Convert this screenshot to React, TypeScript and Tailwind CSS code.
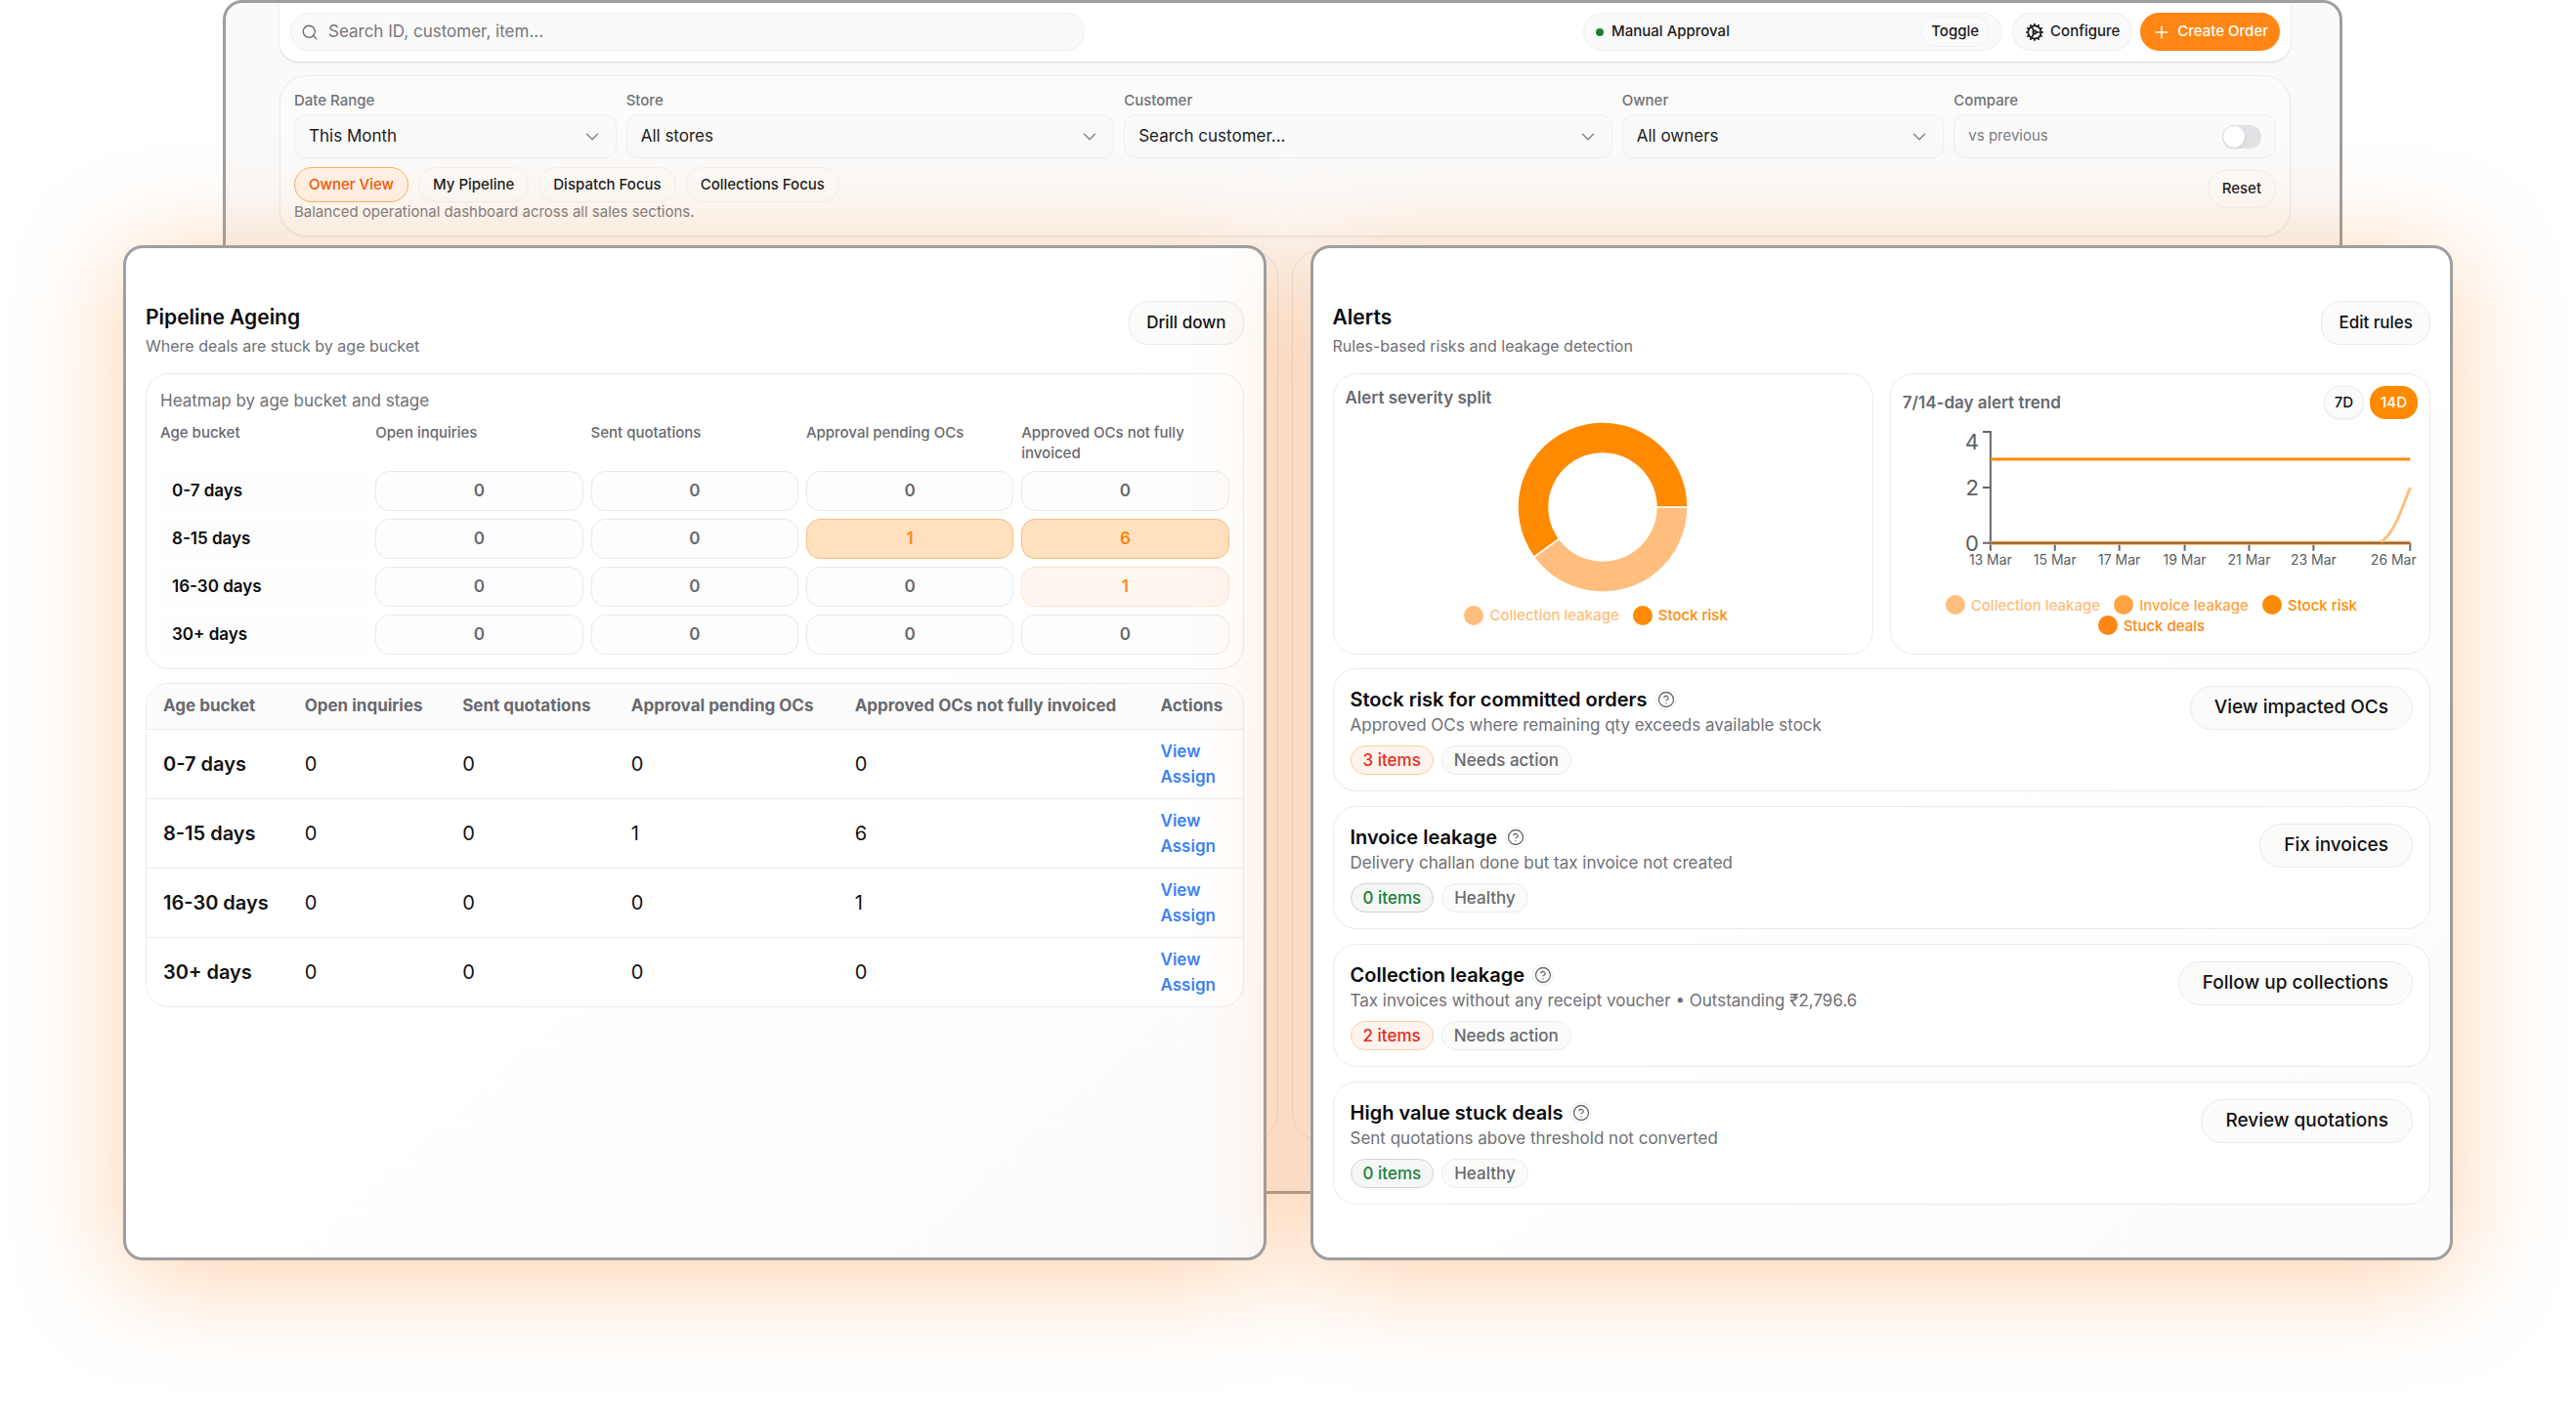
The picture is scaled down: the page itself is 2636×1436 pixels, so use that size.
import type { ReactNode } from "react";
import { ChevronDown, CircleHelp, Cog, Plus, Search } from "lucide-react";

const PRESETS = ["Owner View", "My Pipeline", "Dispatch Focus", "Collections Focus"];
const STAGES = ["Open inquiries", "Sent quotations", "Approval pending OCs", "Approved OCs not fully invoiced"];
const BUCKETS = [
  { label: "0-7 days", counts: [0, 0, 0, 0], heat: [0, 0, 0, 0] },
  { label: "8-15 days", counts: [0, 0, 1, 6], heat: [0, 0, 2, 2] },
  { label: "16-30 days", counts: [0, 0, 0, 1], heat: [0, 0, 0, 1] },
  { label: "30+ days", counts: [0, 0, 0, 0], heat: [0, 0, 0, 0] },
];
const HEAT = [
  "border-[#e9e9eb] bg-[#fdfdfd] text-[#68696e]",
  "border-[#fde3cd] bg-[#fff6f0] text-[#ff8a14]",
  "border-[#fbbd7d] bg-[#ffe1c0] text-[#ff8614]",
];
const ALERTS = [
  { title: "Stock risk for committed orders", text: "Approved OCs where remaining qty exceeds available stock", count: 3, action: "View impacted OCs" },
  { title: "Invoice leakage", text: "Delivery challan done but tax invoice not created", count: 0, action: "Fix invoices" },
  { title: "Collection leakage", text: "Tax invoices without any receipt voucher • Outstanding ₹2,796.6", count: 2, action: "Follow up collections" },
  { title: "High value stuck deals", text: "Sent quotations above threshold not converted", count: 0, action: "Review quotations" },
];
const TICKS = [
  { x: 90, label: "13 Mar" },
  { x: 156, label: "15 Mar" },
  { x: 222, label: "17 Mar" },
  { x: 289, label: "19 Mar" },
  { x: 355, label: "21 Mar" },
  { x: 421, label: "23 Mar" },
  { x: 520, label: "26 Mar" },
];

function SelectField({ id, label, value, span }: { id: string; label: string; value: string; span: string }) {
  return (
    <div className={span}>
      <label htmlFor={id} className="block text-[15px] leading-5 font-medium text-[#707176]">{label}</label>
      <div className="relative mt-1">
        <select id={id} className="h-[45px] w-full appearance-none rounded-xl border border-[#efefef] bg-[#fafafa] px-3.5 text-[17px] text-[#1b1b1d]">
          <option>{value}</option>
        </select>
        <ChevronDown className="pointer-events-none absolute top-3 right-3.5 size-[22px] text-[#8a8a8e]" strokeWidth={1.75} />
      </div>
    </div>
  );
}

function Workspace() {
  return (
    <div className="col-start-1 row-start-1 mr-[113px] mb-[68px] ml-[102px] flex flex-col rounded-[20px] border-[3px] border-[#a19e9d] bg-[#fafafa] pr-[50px] pb-[52px] pl-[55px]">
      <header className="flex items-center gap-2 rounded-b-[20px] bg-white px-[11px] pt-2.5 pb-[11px] shadow-[0_1px_2px_rgba(0,0,0,0.16)]">
        <label className="flex h-[39px] w-[813px] items-center gap-2.5 rounded-[20px] border border-[#eeeeee] bg-[#fafafa] px-2.5">
          <Search className="size-[18px] shrink-0 text-[#6c6c70]" strokeWidth={1.75} />
          <input aria-label="Search" placeholder="Search ID, customer, item..." className="w-full bg-transparent text-[17px] outline-none placeholder:text-[#77777a]" />
        </label>
        <div className="ml-auto flex h-[39px] w-[429px] items-center gap-2 rounded-[20px] border border-[#efefef] bg-[#fafafa] pr-3 pl-3">
          <span className="size-2 rounded-full bg-[#188038]" />
          <span className="text-[15px] font-medium text-[#1b1b1d]">Manual Approval</span>
          <button className="ml-auto h-[31px] rounded-2xl border border-[#eeeeee] px-2.5 text-[15px] font-medium text-[#1b1b1d]">Toggle</button>
        </div>
        <button className="ml-0.5 flex h-[39px] items-center gap-1.5 rounded-[20px] border border-[#eeeeee] bg-[#fafafa] pr-3 pl-3 text-[15px] font-medium text-[#1b1b1d]">
          <Cog className="size-5" strokeWidth={2} />
          Configure
        </button>
        <button className="flex h-[39px] items-center gap-1.5 rounded-[20px] bg-[#ff8614] pr-3 pl-3 text-[15px] font-medium text-white">
          <Plus className="size-5" strokeWidth={1.75} />
          Create Order
        </button>
      </header>

      <section className="mt-3.5 rounded-[28px] border border-[#ececec] bg-[#fbfbfa] px-3.5 pt-[15px] pb-3.5 shadow-[0_1px_2px_rgba(0,0,0,0.08)]">
        <div className="grid grid-cols-12 gap-2.5">
          <SelectField id="range" label="Date Range" value="This Month" span="col-span-2" />
          <SelectField id="store" label="Store" value="All stores" span="col-span-3" />
          <SelectField id="customer" label="Customer" value="Search customer..." span="col-span-3" />
          <SelectField id="owner" label="Owner" value="All owners" span="col-span-2" />
          <div className="col-span-2">
            <span className="block text-[15px] leading-5 font-medium text-[#707176]">Compare</span>
            <label className="mt-1 flex h-[45px] items-center justify-between rounded-xl border border-[#efefef] bg-[#fafafa] px-3.5 text-[15px] text-[#7b7b80]">
              vs previous
              <input type="checkbox" className="peer sr-only" />
              <span className="flex h-6 w-10 rounded-full bg-[#e1e2e5] p-px peer-checked:justify-end">
                <span className="size-[22px] rounded-full bg-white shadow" />
              </span>
            </label>
          </div>
        </div>
        <div className="mt-[9px] flex items-start justify-between">
          <div>
            <div className="flex gap-2.5">
              {PRESETS.map((name, i) => (
                <button
                  key={name}
                  className={
                    i === 0
                      ? "h-9 rounded-full border border-[#fbb061] bg-[#fff2e8] px-3.5 text-[15px] font-medium text-[#f0560a]"
                      : "h-9 rounded-full border border-[#f1f0ef] px-3.5 text-[15px] font-medium text-[#1b1b1d]"
                  }
                >
                  {name}
                </button>
              ))}
            </div>
            <p className="text-[15px] leading-5 text-[#7b7b80]">Balanced operational dashboard across all sales sections.</p>
          </div>
          <button className="mt-[3px] h-[39px] rounded-full border border-[#f1efee] px-3.5 text-[15px] font-medium text-[#1b1b1d]">Reset</button>
        </div>
      </section>

      <div className="mt-3.5 grid flex-1 grid-cols-2 gap-3.5">
        <div className="rounded-[28px] border border-[#e6e6e6]" />
        <div className="rounded-[28px] border border-[#e6e6e6]" />
      </div>
    </div>
  );
}

function Panel({ title, subtitle, action, children }: { title: string; subtitle: string; action: string; children: ReactNode }) {
  return (
    <section className="rounded-[20px] border-[3px] border-[#9d9fa1] bg-linear-to-br from-white from-50% to-[#fbfbfb] px-5 py-[54px] shadow-[0_14px_110px_rgba(255,130,25,0.38)]">
      <div className="mb-4 flex items-start justify-between">
        <div className="pt-[3px]">
          <h2 className="text-[21px] leading-7 font-semibold text-[#0c0c0e]">{title}</h2>
          <p className="mt-[3px] text-[16px] leading-6 text-[#6f7075]">{subtitle}</p>
        </div>
        <button className="h-[45px] rounded-[20px] border border-[#ebebeb] bg-[#fbfbfa] px-[17px] text-[17px] font-medium text-[#121214]">{action}</button>
      </div>
      {children}
    </section>
  );
}

function Heatmap() {
  return (
    <div className="rounded-3xl border border-[#ebebeb] bg-white px-3.5 pt-[15px] pb-3.5">
      <h3 className="text-[17px] leading-6 text-[#6f7075]">Heatmap by age bucket and stage</h3>
      <div className="mt-2.5 grid grid-cols-5 gap-2">
        {["Age bucket", ...STAGES].map((name) => (
          <div key={name} className="text-[15px] leading-[21px] font-medium text-[#68696e]">{name}</div>
        ))}
        {BUCKETS.flatMap((row) => [
          <div key={row.label} className="flex h-[41px] items-center rounded-xl bg-[#fdfdfd] px-3 text-[17px] font-semibold text-[#0c0c0e]">{row.label}</div>,
          ...row.counts.map((n, i) => (
            <div key={row.label + i} className={`flex h-[41px] items-center justify-center rounded-[14px] border text-[17px] font-semibold ${HEAT[row.heat[i]]}`}>{n}</div>
          )),
        ])}
      </div>
    </div>
  );
}

function AgeingTable() {
  return (
    <div className="mt-3.5 overflow-hidden rounded-3xl border border-[#ebebeb] bg-white">
      <table className="w-full table-fixed text-left">
        <colgroup>
          <col className="w-[12.9%]" />
          <col className="w-[14.4%]" />
          <col className="w-[15.4%]" />
          <col className="w-[20.4%]" />
          <col className="w-[27.9%]" />
          <col className="w-[9%]" />
        </colgroup>
        <thead className="bg-[#fcfcfc] text-[17px] text-[#68696e]">
          <tr className="h-[46px] whitespace-nowrap">
            {["Age bucket", ...STAGES, "Actions"].map((name) => (
              <th key={name} className="pl-[17px] font-bold">{name}</th>
            ))}
          </tr>
        </thead>
        <tbody className="text-[20px] text-[#121214]">
          {BUCKETS.map((row) => (
            <tr key={row.label} className="h-[71px] border-t border-[#ebebeb]">
              <th className="pl-[17px] font-semibold">{row.label}</th>
              {row.counts.map((n, i) => (
                <td key={i} className="pl-[17px]">{n}</td>
              ))}
              <td className="pl-[17px] text-[17px] leading-[26px] font-semibold text-[#3b82f6]">
                <a href="#view" className="block">View</a>
                <a href="#assign" className="block">Assign</a>
              </td>
            </tr>
          ))}
        </tbody>
      </table>
    </div>
  );
}

function LegendItem({ dot, text, label }: { dot: string; text: string; label: string }) {
  return (
    <li className={`flex items-center gap-1.5 text-[15px] leading-[21px] font-medium ${text}`}>
      <span className={`size-5 rounded-full ${dot}`} />
      {label}
    </li>
  );
}

function SeverityCard() {
  return (
    <div className="rounded-3xl border border-[#ebebeb] bg-white px-3 pt-3 pb-[29px]">
      <h3 className="text-[17px] leading-6 font-semibold text-[#68696e]">Alert severity split</h3>
      <svg viewBox="-88 -88 176 176" className="mx-auto mt-3 size-44">
        <path d="M87 0A87 87 0 0 1 -70.4 51.1L-44.5 32.3A55 55 0 0 0 55 0Z" fill="#ffbe7d" stroke="#fff" strokeWidth="1.5" />
        <path d="M87 0A87 87 0 1 0 -70.4 51.1L-44.5 32.3A55 55 0 1 1 55 0Z" fill="#ff8a00" stroke="#fff" strokeWidth="1.5" />
      </svg>
      <ul className="mt-3 flex justify-center gap-3.5 pr-3.5">
        <LegendItem dot="bg-[#ffbe7d]" text="text-[#ffbe7d]" label="Collection leakage" />
        <LegendItem dot="bg-[#ff8a00]" text="text-[#ff8a00]" label="Stock risk" />
      </ul>
    </div>
  );
}

function TrendCard() {
  return (
    <div className="rounded-3xl border border-[#ebebeb] bg-white px-3 pt-3">
      <div className="flex items-center gap-1.5">
        <h3 className="mr-auto text-[17px] leading-6 font-semibold text-[#68696e]">7/14-day alert trend</h3>
        <button className="h-[34px] rounded-2xl border border-[#ececec] bg-[#fbfbfa] px-2.5 text-[15px] font-medium text-[#121214] shadow-xs">7D</button>
        <button className="h-[34px] rounded-2xl bg-[#ff8a00] px-[11px] text-[15px] font-medium text-white">14D</button>
      </div>
      <svg viewBox="0 0 528 154" className="mt-1.5 w-full font-['Inter',sans-serif]">
        <g stroke="#66676c" strokeWidth="2" fill="none">
          <path d="M82 7H90V121H82M82 64H90" />
          {TICKS.map((t) => (
            <path key={t.label} d={`M${t.x} 121V129`} />
          ))}
        </g>
        <path d="M90 121H520" stroke="#ffb366" strokeWidth="4" />
        <path d="M90 121H520" stroke="#8f6030" strokeWidth="2" />
        <path d="M90 35H520" stroke="#ff8a00" strokeWidth="3" />
        <path d="M490 120C503 112 510 90 520 64" stroke="#ffbe7d" strokeWidth="3" fill="none" />
        <g fill="#5b5c60" fontSize="22" textAnchor="end">
          <text x="78" y="25">4</text>
          <text x="78" y="72">2</text>
          <text x="78" y="129">0</text>
        </g>
        <g fill="#5b5c60" fontSize="14" textAnchor="middle">
          {TICKS.map((t) => (
            <text key={t.label} x={Math.min(t.x, 503)} y="143">{t.label}</text>
          ))}
        </g>
      </svg>
      <ul className="mt-5 flex flex-wrap justify-center gap-x-3.5 px-10 pl-[22px]">
        <LegendItem dot="bg-[#ffbe7d]" text="text-[#ffbe7d]" label="Collection leakage" />
        <LegendItem dot="bg-[#ffa343]" text="text-[#ffa343]" label="Invoice leakage" />
        <LegendItem dot="bg-[#ff8a00]" text="text-[#ff8a00]" label="Stock risk" />
        <LegendItem dot="bg-[#ff8614]" text="text-[#ff8614]" label="Stuck deals" />
      </ul>
    </div>
  );
}

function AlertCard({ title, text, count, action }: (typeof ALERTS)[number]) {
  return (
    <article className="flex items-start justify-between rounded-3xl border border-[#ebebeb] bg-white px-[17px] pt-[17px] pb-4">
      <div>
        <h3 className="flex items-center gap-2 text-[20px] leading-7 font-semibold text-[#0c0c0e]">
          {title}
          <button aria-label={`About ${title}`} className="flex size-[22px] items-center justify-center rounded-full border border-[#ededed] text-[#68696e]">
            <CircleHelp className="size-[18px] shrink-0" strokeWidth={1.75} />
          </button>
        </h3>
        <p className="text-[17px] leading-6 text-[#6f7075]">{text}</p>
        <div className="mt-[9px] flex gap-2">
          <span
            className={
              count > 0
                ? "rounded-full border border-[#fbcda6] bg-[#fff4ed] px-3 text-[17px] leading-7 font-medium text-[#e22d1f]"
                : "rounded-full border border-[#cfd5d2] bg-[#f4f7f5] px-3 text-[17px] leading-7 font-medium text-[#1a7f3c]"
            }
          >
            {count} items
          </span>
          <span className="rounded-full border border-[#ececec] bg-[#fbfbfa] px-3 text-[17px] leading-7 font-medium text-[#68696e]">
            {count > 0 ? "Needs action" : "Healthy"}
          </span>
        </div>
      </div>
      <button className="h-[45px] rounded-full border border-[#ebebeb] bg-[#fbfbfa] px-6 text-[19px] font-medium text-[#121214]">{action}</button>
    </article>
  );
}

export default function App() {
  return (
    <main className="grid min-h-screen content-start overflow-hidden bg-white px-[126px] pb-36 font-['Inter',sans-serif]">
      <Workspace />
      <div className="relative col-start-1 row-start-1 mt-[251px] grid grid-cols-2 gap-[45px]">
        <Panel title="Pipeline Ageing" subtitle="Where deals are stuck by age bucket" action="Drill down">
          <Heatmap />
          <AgeingTable />
        </Panel>
        <Panel title="Alerts" subtitle="Rules-based risks and leakage detection" action="Edit rules">
          <div className="grid grid-cols-2 gap-[17px]">
            <SeverityCard />
            <TrendCard />
          </div>
          <div className="mt-3.5 flex flex-col gap-[15px]">
            {ALERTS.map((a) => (
              <AlertCard key={a.title} {...a} />
            ))}
          </div>
        </Panel>
      </div>
    </main>
  );
}
